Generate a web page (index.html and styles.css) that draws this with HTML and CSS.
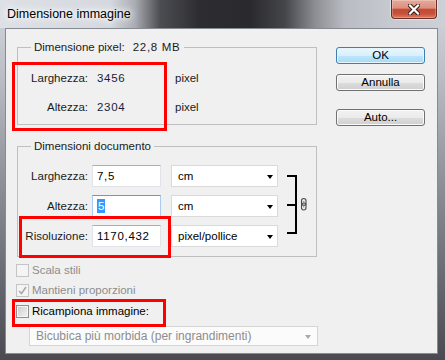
FILE: index.html
```html
<!DOCTYPE html>
<html lang="it">
<head>
<meta charset="utf-8">
<title>Dimensione immagine</title>
<link rel="stylesheet" href="styles.css">
</head>
<body>
<div class="window">
  <div class="titlebar">
    <span class="title">Dimensione immagine</span>
    <div class="close">
      <svg width="12" height="11" viewBox="0 0 12 11">
        <path d="M2 1.5 L10 9.5 M10 1.5 L2 9.5" stroke="#3a1d18" stroke-width="4.2" stroke-linecap="round" fill="none"/>
        <path d="M2 1.5 L10 9.5 M10 1.5 L2 9.5" stroke="#ffffff" stroke-width="2.2" stroke-linecap="square" fill="none"/>
      </svg>
    </div>
  </div>
  <div class="client">
    <div class="left">
      <div class="group g1">
        <div class="gtitle"><span>Dimensione pixel:</span><span class="num size">22,8 MB</span></div>
        <div class="grid g1grid">
          <span class="lbl">Larghezza:</span><span class="val num">3456</span><span class="unit">pixel</span>
          <span class="lbl">Altezza:</span><span class="val num">2304</span><span class="unit">pixel</span>
        </div>
      </div>
      <div class="group g2">
        <div class="gtitle">Dimensioni documento</div>
        <div class="grid g2grid">
          <span class="lbl">Larghezza:</span><div class="field num">7,5</div><div class="combo">cm</div>
          <svg class="link" width="32" height="82" viewBox="0 0 32 82">
            <path d="M9 11 H19 M9 40 H19 M9 68 H19" stroke="#000" stroke-width="2" fill="none"/>
            <path d="M18 10 V69" stroke="#000" stroke-width="2" fill="none"/>
            <rect x="23.5" y="33.5" width="4.5" height="7" rx="2.2" stroke="#4a4a4a" stroke-width="1.1" fill="#e8e8e8"/>
            <rect x="23.5" y="38" width="4.5" height="7" rx="2.2" stroke="#4a4a4a" stroke-width="1.1" fill="none"/>
            <path d="M25.75 36 V42.5" stroke="#8a8a8a" stroke-width="1" fill="none"/>
          </svg>
          <span class="lbl">Altezza:</span><div class="field focus"><span class="sel">5</span></div><div class="combo">cm</div>
          <span class="lbl">Risoluzione:</span><div class="field num">1170,432</div><div class="combo">pixel/pollice</div>
        </div>
      </div>
      <div class="checks">
        <div class="check disabled"><span class="box"></span><span>Scala stili</span></div>
        <div class="check disabled"><span class="box checked"><svg width="11" height="11" viewBox="0 0 11 11"><path d="M2 6 L4.5 8.5 L9 2" stroke="#a8a8a8" stroke-width="1.6" fill="none"/></svg></span><span>Mantieni proporzioni</span></div>
        <div class="check resample"><span class="box"></span><span>Ricampiona immagine:</span></div>
      </div>
      <div class="combo wide disabled">Bicubica più morbida (per ingrandimenti)</div>
    </div>
    <div class="buttons">
      <div class="btn default">OK</div>
      <div class="btn annulla">Annulla</div>
      <div class="btn auto">Auto...</div>
    </div>
    <div class="mark m1"></div>
    <div class="mark m2"></div>
    <div class="mark m3"></div>
  </div>
</div>
</body>
</html>
```

FILE: styles.css
```css
* { box-sizing: border-box; }
html, body { margin: 0; padding: 0; }
body {
  width: 445px;
  height: 360px;
  overflow: hidden;
  font-family: "Liberation Sans", Arial, sans-serif;
  font-size: 11.5px;
  color: #1b1b1b;
}
.num { letter-spacing: 0.7px; }
.window {
  height: 360px;
  display: flex;
  flex-direction: column;
  background: linear-gradient(to bottom, #d3d7dd 0, #bcc0c6 20%, #8e9198 50%, #5e5f66 85%, #4a4a50 100%);
}
.titlebar {
  height: 28px;
  flex: none;
  display: flex;
  justify-content: space-between;
  align-items: flex-start;
  background: linear-gradient(to right, #dde1e6 0px, #d5d9df 110px, #a9acb2 135px, #4c4d52 160px, #2d2d31 200px, #2a2a2e 250px, #45464b 285px, #8c8e94 315px, #b9bcc2 345px, #c6cad0 390px, #cdd1d7 445px);
}
.title {
  padding: 7px 0 0 7px;
  font-size: 12.5px;
  line-height: 14px;
  color: #000;
  text-shadow: 0 0 5px #fff, 0 0 9px #fff, 0 0 12px #fff;
}
.close {
  width: 46px;
  height: 19px;
  margin-right: 8px;
  display: flex;
  align-items: center;
  justify-content: center;
  background: linear-gradient(to bottom, #e7aa9b 0%, #dc8f7f 45%, #c64a35 52%, #c5503b 75%, #dd7a5f 100%);
  border: 1px solid #6a2d24;
  border-top: 0;
  border-radius: 0 0 4px 4px;
  box-shadow: 0 0 0 1px rgba(255,255,255,0.45), inset 0 0 0 1px rgba(255,255,255,0.25);
}
.client {
  flex: none;
  height: 326px;
  margin: 0 7px 0 5px;
  border: 1px solid #868a92;
  background: #f0f0f0;
  position: relative;
  display: flex;
  padding: 18px 12px 0 10px;
}
.left { flex: 1; }
.group {
  margin-left: 1px;
  width: 300px;
  border: 1px solid #bfbfbf;
}
.gtitle {
  margin: -7px 0 0 13px;
  padding: 0 3px;
  width: fit-content;
  line-height: 13px;
  background: #f0f0f0;
  color: #1b1b1b;
}
.size { margin-left: 8px; }
.grid {
  display: grid;
  grid-template-columns: 74px 79px 107px 1fr;
  grid-auto-rows: 22px;
}
.g1 { padding-bottom: 6px; }
.g1grid { margin-top: 13px; row-gap: 7px; }
.g2 { margin-top: 21px; padding-bottom: 9px; }
.g2grid { margin-top: 12px; row-gap: 8px; }
.lbl {
  text-align: right;
  padding-right: 4px;
  line-height: 22px;
  grid-column: 1;
}
.val {
  padding-left: 5px;
  line-height: 22px;
  color: #1c1c3a;
}
.unit {
  padding-left: 4px;
  line-height: 22px;
}
.field {
  width: 69px;
  height: 22px;
  border: 1px solid #e2e3ea;
  border-top-color: #abadb3;
  background: #fff;
  padding-left: 4px;
  line-height: 20px;
  color: #000;
}
.field.focus {
  border-color: #a9cbef;
  border-top-color: #569de5;
}
.sel {
  background: #3399ff;
  color: #fff;
  display: inline-block;
  line-height: 14px;
  padding: 0 1px;
}
.combo {
  height: 22px;
  border: 1px solid #dadada;
  background: #fff;
  display: flex;
  align-items: center;
  justify-content: space-between;
  padding: 0 4px 0 6px;
  color: #000;
}
.combo::after {
  content: "";
  border-top: 4px solid #000;
  border-left: 3.5px solid transparent;
  border-right: 3.5px solid transparent;
  margin-top: 1px;
}
.link {
  grid-column: 4;
  grid-row: 1 / span 3;
}
.checks { margin-top: 3px; }
.check {
  display: flex;
  align-items: center;
  height: 20px;
  gap: 3px;
}
.check.resample { margin-top: 1px; }
.box {
  width: 13px;
  height: 13px;
  border: 1px solid #8e8f8f;
  background: linear-gradient(to bottom right, #cbcbcb, #f4f4f4);
  box-shadow: inset 0 0 0 1px #f4f4f4;
  display: flex;
  align-items: center;
  justify-content: center;
}
.check.disabled { color: #8d8d8d; }
.check.disabled .box {
  border-color: #c4c4c4;
  background: #f4f4f4;
  box-shadow: none;
}
.check.resample { color: #000; }
.combo.wide {
  margin: 5px 0 0 13px;
  width: 289px;
  height: 20px;
  border-color: #d5d5d5;
  background: #fbfbfb;
  color: #8d8d8d;
  padding-right: 6px;
  font-size: 12px;
}
.combo.wide::after {
  border-top-color: #a8a8a8;
}
.buttons {
  width: 89px;
  display: flex;
  flex-direction: column;
}
.btn {
  height: 17px;
  border: 1px solid #707070;
  border-radius: 3px;
  text-align: center;
  line-height: 15px;
  color: #000;
  background: linear-gradient(to bottom, #f2f2f2 0%, #ebebeb 50%, #dddddd 51%, #cfcfcf 100%);
  box-shadow: inset 0 0 0 1px #fbfbfb;
}
.btn.default {
  border-color: #3c7fb1;
  background: linear-gradient(to bottom, #eaf6fd 0%, #d9f0fc 50%, #bee6fd 51%, #a7d9f5 100%);
  box-shadow: inset 0 0 0 1px #e6f5fd;
}
.btn.annulla { margin-top: 10px; }
.btn.auto { margin-top: 18px; }
.mark {
  position: absolute;
  border: 3px solid #ff0000;
}
.m1 { left: 6px; top: 33px; width: 155px; height: 69px; }
.m2 { left: 13px; top: 187px; width: 152px; height: 42px; }
.m3 { left: 6px; top: 270px; width: 154px; height: 28px; }
```
